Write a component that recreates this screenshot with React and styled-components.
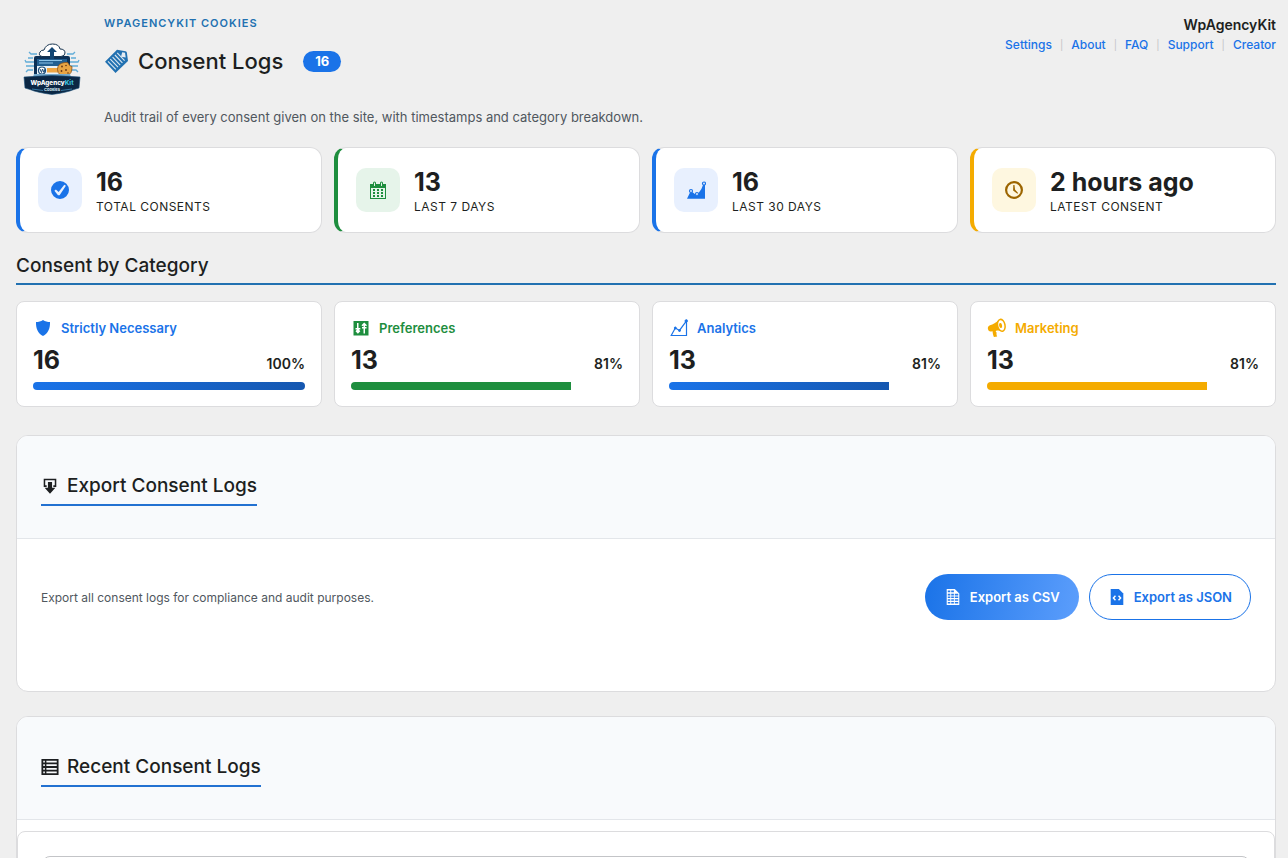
import React from "react";
import styled, { createGlobalStyle } from "styled-components";

const GlobalStyle = createGlobalStyle`
  *, *::before, *::after { box-sizing: border-box; }
  body {
    margin: 0;
    background: #efefef;
    color: #1d1f21;
    font-family: Inter, "Liberation Sans", sans-serif;
    font-size: 13px;
    line-height: 20px;
  }
  h1, h2, h3, p, dl, dd { margin: 0; }
`;

const Page = styled.main`
  height: 100vh;
  overflow: hidden;
  padding: 13px 12px 0 16px;
`;

const Header = styled.header`
  display: flex;
  gap: 16px;
  margin-bottom: 20px;
`;

const LogoSlot = styled.div`
  width: 72px;
  padding-top: 28px;
  display: flex;
  justify-content: center;
`;

const Intro = styled.div`
  flex: 1;
`;

const Eyebrow = styled.p`
  color: #2271b1;
  font-size: 11px;
  font-weight: 600;
  letter-spacing: 1px;
  text-transform: uppercase;
`;

const TitleRow = styled.div`
  display: flex;
  align-items: center;
  height: 32px;
  margin: 12px 0 30px;
`;

const Title = styled.h1`
  margin: 0 20px 0 9px;
  font-size: 22px;
  font-weight: 500;
  line-height: 32px;
`;

const CountBadge = styled.span`
  padding: 0 12px;
  border-radius: 11px;
  background: #1a73e8;
  color: #fff;
  font-weight: 700;
  line-height: 21px;
`;

const Description = styled.p`
  color: #50575e;
`;

const Brand = styled.div`
  text-align: right;
  padding-top: 2px;
`;

const BrandName = styled.strong`
  display: block;
  font-size: 14px;
  font-weight: 600;
`;

const BrandNav = styled.nav`
  display: flex;
  font-size: 12px;
  font-weight: 500;

  a {
    color: #1a73e8;
    text-decoration: none;
  }
  a + a::before {
    content: "|";
    margin: 0 8px;
    color: #c3c4c7;
    font-size: 10px;
    font-weight: 400;
    vertical-align: top;
  }
`;

const CardGrid = styled.div`
  display: grid;
  grid-template-columns: repeat(4, 1fr);
  gap: 12px;
`;

const StatCard = styled.article`
  display: flex;
  align-items: center;
  gap: 14px;
  height: 86px;
  padding: 0 18px;
  background: #fff;
  border: 1px solid #dcdcde;
  border-left: 4px solid ${(p) => p.$accent};
  border-radius: 12px;
`;

const StatIcon = styled.div`
  display: grid;
  place-items: center;
  width: 44px;
  height: 44px;
  border-radius: 10px;
  background: ${(p) => p.$tint};
  color: ${(p) => p.$ink};
`;

const StatText = styled.div`
  padding-top: 4px;
`;

const StatValue = styled.div`
  font-size: 25px;
  font-weight: 700;
  line-height: 30px;
`;

const StatLabel = styled.div`
  font-size: 12px;
  letter-spacing: 0.04em;
  text-transform: uppercase;
`;

const SectionTitle = styled.h2`
  margin: 16px 0;
  padding: 4px 0;
  border-bottom: 2px solid #2271b1;
  font-size: 19px;
  font-weight: 500;
  line-height: 26px;
`;

const CategoryCard = styled.article`
  height: 106px;
  padding: 16px;
  background: #fff;
  border: 1px solid #dcdcde;
  border-radius: 8px;
`;

const CategoryName = styled.h3`
  display: flex;
  align-items: center;
  gap: 8px;
  color: ${(p) => p.$accent};
  font-size: 13px;
  font-weight: 600;
`;

const CategoryFigures = styled.div`
  display: flex;
  align-items: baseline;
  justify-content: space-between;
  margin: 7px 0;
`;

const CategoryCount = styled.span`
  font-size: 25px;
  font-weight: 700;
  line-height: 30px;
`;

const CategoryShare = styled.span`
  font-size: 14px;
  font-weight: 600;
`;

const Track = styled.div`
  height: 8px;
  border-radius: 4px;
  overflow: hidden;
`;

const Fill = styled.div`
  height: 100%;
  background: ${(p) => p.$paint};
`;

const Panel = styled.section`
  margin-top: ${(p) => p.$gap};
  background: #fff;
  border: 1px solid #dcdcde;
  border-radius: 12px;
  overflow: hidden;
`;

const PanelHead = styled.div`
  height: 103px;
  padding: 36px 24px 0;
  background: #f8fafc;
  border-bottom: 1px solid #e3e6ea;
`;

const PanelTitle = styled.h2`
  display: inline-flex;
  align-items: center;
  gap: 8px;
  height: 34px;
  padding-bottom: 4px;
  border-bottom: 2px solid #2271d1;
  font-size: 19px;
  font-weight: 500;
`;

const ExportRow = styled.div`
  display: flex;
  align-items: center;
  justify-content: space-between;
  padding: 35px 24px 71px;
`;

const ExportText = styled.p`
  padding-top: 2px;
  color: #50575e;
  font-size: 12px;
`;

const Actions = styled.div`
  display: flex;
  gap: 10px;
`;

const PillButton = styled.button`
  display: flex;
  align-items: center;
  gap: 8px;
  height: 46px;
  padding: 0 18px;
  border: 1px solid ${(p) => (p.$filled ? "transparent" : "#1a73e8")};
  border-radius: 23px;
  background: ${(p) => (p.$filled ? "linear-gradient(100deg, #1a73e8, #5c9efc) border-box" : "#fff")};
  color: ${(p) => (p.$filled ? "#fff" : "#1a73e8")};
  font: 600 13px/20px Inter, "Liberation Sans", sans-serif;
  cursor: pointer;
`;

const LogPanel = styled.div`
  margin-top: 11px;
  padding: 24px;
  border: 1px solid #dcdcde;
  border-radius: 8px;
`;

const LogTable = styled.div`
  height: 60px;
  border: 1px solid #c3c4c7;
  border-radius: 8px;
`;

const Icon = ({ size = 20, children }) => (
  <svg width={size} height={size} viewBox="0 0 20 20" fill="currentColor" aria-hidden="true">
    {children}
  </svg>
);

const icons = {
  check: (
    <path fillRule="evenodd" d="M10 1a9 9 0 1 0 0 18 9 9 0 0 0 0-18zm4.3 3.7 1.6 1.1-6.3 9.4H8l-3.6-4.4 1.5-1.4 2.7 2.5z" />
  ),
  calendar: (
    <path
      fillRule="evenodd"
      d="M15 4h3v15H2V4h3V3a1.5 1.5 0 0 1 3 0v1h4V3a1.5 1.5 0 0 1 3 0v1zM6 3v2.5a.5.5 0 0 0 1 0V3a.5.5 0 0 0-1 0zm7 0v2.5a.5.5 0 0 0 1 0V3a.5.5 0 0 0-1 0zM3 8v10h14V8zm2 1h2v2H5zm4 0h2v2H9zm4 0h2v2h-2zm-8 3h2v2H5zm4 0h2v2H9zm4 0h2v2h-2zm-8 3h2v2H5zm4 0h2v2H9zm4 0h2v2h-2z"
    />
  ),
  area: (
    <>
      <path d="M1 18.800 4 12.500l2.200-.5 4.600 3.500 4.600-6.500L17 5h2v13.800z" />
      <g fill="#e8f0fe" stroke="currentColor" strokeWidth="1.200">
        <circle cx="5" cy="11" r="1.500" />
        <circle cx="11" cy="14" r="1.500" />
        <circle cx="18" cy="3.500" r="1.500" />
      </g>
    </>
  ),
  clock: (
    <path fillRule="evenodd" d="M10 1a9 9 0 1 1 0 18 9 9 0 0 1 0-18zm0 2.200a6.800 6.800 0 1 0 0 13.600 6.800 6.800 0 0 0 0-13.600zM9.300 5h1.200l.5 4.600 3.100 3.500-.7.7-4.300-3.200z" />
  ),
  shield: <path d="M10 2c2.200 1.400 4.500 2 7 2 .2 6.800-2 11.400-7 14C5 15.400 2.800 10.800 3 4c2.500 0 4.800-.6 7-2z" />,
  sliders: (
    <path fillRule="evenodd" d="M2.500 3h15v14.500h-15zM6 5v5H4.500v1.500H6l-1.500 1.700 2.400 2.600 2.400-2.600-1.500-1.700h1.500V10H7.500V5zm7.200-.5-2.700 2.800 1 1 1-.9V9H11v1.500h1.500v5H14v-5h1.500V9H14V7.400l1 .9 1-1z" />
  ),
  line: (
    <g fill="none" stroke="currentColor">
      <path d="M2.200 17.500 6.300 10l4.200 2.400 7-9.500v14.600z" strokeWidth="1.200" />
      <circle cx="6.300" cy="10" r="1" fill="currentColor" />
      <circle cx="10.500" cy="12.500" r="1" fill="currentColor" />
      <circle cx="17.200" cy="3" r="1.200" fill="currentColor" />
    </g>
  ),
  megaphone: (
    <>
      <path d="M12.200 1.500C9 5 6 6.300 3 7.200 1 7.900.5 9.500 1 11.300c.5 1.700 1.700 2.500 3.200 2.200l1.400-.2c0 1.700.5 3.700 1.300 5.700l3.300-.5c-.7-1.300-.9-2.700-.5-4.100l-1-.3.400-1.300c2.400-.4 4.600-.2 7.400.8z" />
      <ellipse cx="14.300" cy="7.300" rx="3.700" ry="6" transform="rotate(-12 14.300 7.300)" fill="#fff" stroke="currentColor" strokeWidth="1.500" />
      <ellipse cx="13.600" cy="7.500" rx="1.500" ry="2.500" transform="rotate(-12 13.600 7.500)" />
    </>
  ),
  download: (
    <path d="M3 2h14v9h-3.300V9.300h1.600V3.700H4.700v5.600h1.600V11H3zM7.700 5.500h4.600V12H16l-6 6.500L4 12h3.700z" />
  ),
  rows: (
    <path fillRule="evenodd" d="M.5 1h19v18H.5zm2 2v2h1.800V3zm3.500 0v2h11.500V3zM2.500 7v2h1.800V7zM6 7v2h11.500V7zm-3.500 4v2h1.800v-2zM6 11v2h11.500v-2zm-3.500 4v2h1.800v-2zM6 15v2h11.500v-2z" />
  ),
  sheet: (
    <path fillRule="evenodd" d="M3 1h9l5 5v13H3zm1.200 1.800v2H7v-2zm3.800 0v2h3v-2zM4.200 6.500v1.700H7V6.500zM8 6.500v1.700h3V6.500zm4 0v1.700h3.800V6.500zm-7.800 3v1.700H7V9.500zM8 9.500v1.700h3V9.500zm4 0v1.700h3.800V9.500zm-7.800 3v1.700H7v-1.700zM8 12.500v1.700h3v-1.700zm4 0v1.700h3.800v-1.700zm-7.800 3v1.700H7v-1.700zM8 15.500v1.700h3v-1.700zm4 0v1.700h3.800v-1.700z" />
  ),
  code: (
    <>
      <path d="M3 1h9l5 5v13H3z" />
      <path d="M8.300 8.500 6 11l2.300 2.500M11.700 8.500 14 11l-2.300 2.500" fill="none" stroke="#fff" strokeWidth="1.600" />
    </>
  ),
};

const PageIcon = () => (
  <svg width="25" height="25" viewBox="0 0 25 25" aria-hidden="true">
    <path d="M13 .8 21.500 2.200Q22.800 2.500 22.900 3.800L24 12 11.500 24 1 12.800z" fill="#2271b1" />
    <path d="M18.200 3.300l2.800.5.700 4.700-4.700-.7z" fill="#e4ecf3" />
    <path
      d="M4 12.300l7.800 8M6.300 10.200l7.700 8M8.600 8.100l7.600 8M10.900 6l7.500 7.900M13.200 3.900l7.400 7.700"
      stroke="#dbe7f1"
      strokeWidth="1.100"
    />
  </svg>
);

const Logo = () => (
  <svg width="58" height="64" viewBox="0 0 58 64" role="img" aria-label="WpAgencyKit Cookies">
    <g stroke="#62add8" strokeWidth="1.300" fill="none">
      <path d="M10 17H5M11 21H3l-1-2M11 25H3M10 29H5l-2 2M14 13H8l-2-2M48 17h5M47 21h8l1-2M47 25h8M48 29h5l2 2M44 13h6l2-2" />
    </g>
    <path d="M11 35V17q0-2 2-2h32q2 0 2 2v18z" fill="#0d3156" />
    <path d="M14 18h30v16H14z" fill="#225f91" />
    <path d="M16 19.500h23M16 22h14" stroke="#8bc3e8" strokeWidth="1" />
    <path d="M14 25h30v9H14z" fill="#e9f2f8" />
    <path d="M19 15.500q-4-1-2-4.500 1-2 4-2 2-6 8.500-6 6.500 0 7.500 5 5 0 5 4 0 3-4 3.500z" fill="#fff" stroke="#17344f" strokeWidth="1" />
    <path d="M29 6l5 5h-3v7h-4v-7h-3z" fill="#124674" />
    <circle cx="19" cy="29.500" r="3.500" fill="#fff" stroke="#194c78" strokeWidth="1.200" />
    <path d="M17 28l1.500 3.500L19.500 28l1.500 3.500 1-3.500" fill="none" stroke="#194c78" />
    <rect x="24" y="27" width="11" height="4.500" fill="#eea644" />
    <path d="M42 21.500q3-1 4 2 1 2 3 2 0 4-1 6-2 3.500-6 3.500-7 0-7.500-6.500 0-6.500 7.500-7z" fill="#e9a544" stroke="#86501c" strokeWidth=".8" />
    <g fill="#643516">
      <circle cx="39" cy="25.500" r=".9" />
      <circle cx="43" cy="24.500" r=".8" />
      <circle cx="38.500" cy="30" r=".9" />
      <circle cx="43" cy="29" r=".9" />
      <circle cx="45" cy="32" r=".8" />
    </g>
    <path d="M11 33h36l1 3H10z" fill="#75aacd" />
    <path d="M1 36q28-3 56 0l-1 11-5 1.500q-7 3-22 5-15-2-22-5L2 47z" fill="#0b2744" stroke="#174e77" strokeWidth=".6" />
    <path d="M9 48l11 1.500M38 49.500 49 48" stroke="#4a9bc8" strokeWidth=".7" />
    <text x="29" y="43.500" textAnchor="middle" fontFamily="Inter, sans-serif" fontSize="6.300" fontWeight="800" fill="#fff">
      WpAgency<tspan fill="#3ec1dd">Kit</tspan>
    </text>
    <text x="29" y="49.500" textAnchor="middle" fontFamily="Inter, sans-serif" fontSize="4" fontWeight="700" fill="#dcecf6">
      Cookies
    </text>
  </svg>
);

const BLUE = "#1a73e8";
const GREEN = "#1e8e3e";
const AMBER = "#f4ab00";
const BLUE_BAR = "linear-gradient(90deg, #1a73e8, #1557b0)";

const stats = [
  { value: "16", label: "Total consents", icon: "check", accent: BLUE, ink: BLUE, tint: "#e8f0fe" },
  { value: "13", label: "Last 7 days", icon: "calendar", accent: GREEN, ink: GREEN, tint: "#e6f4ea" },
  { value: "16", label: "Last 30 days", icon: "area", accent: BLUE, ink: BLUE, tint: "#e8f0fe" },
  { value: "2 hours ago", label: "Latest consent", icon: "clock", accent: AMBER, ink: "#9c6500", tint: "#fef7e0" },
];

const categories = [
  { name: "Strictly Necessary", count: 16, share: 100, icon: "shield", accent: BLUE, paint: BLUE_BAR },
  { name: "Preferences", count: 13, share: 81, icon: "sliders", accent: GREEN, paint: GREEN },
  { name: "Analytics", count: 13, share: 81, icon: "line", accent: BLUE, paint: BLUE_BAR },
  { name: "Marketing", count: 13, share: 81, icon: "megaphone", accent: AMBER, paint: AMBER },
];

export default function App() {
  return (
    <>
      <GlobalStyle />
      <Page>
        <Header>
          <LogoSlot>
            <Logo />
          </LogoSlot>
          <Intro>
            <Eyebrow>WpAgencyKit Cookies</Eyebrow>
            <TitleRow>
              <PageIcon />
              <Title>Consent Logs</Title>
              <CountBadge>16</CountBadge>
            </TitleRow>
            <Description>
              Audit trail of every consent given on the site, with timestamps and category breakdown.
            </Description>
          </Intro>
          <Brand>
            <BrandName>WpAgencyKit</BrandName>
            <BrandNav>
              {["Settings", "About", "FAQ", "Support", "Creator"].map((item) => (
                <a key={item} href={`#${item.toLowerCase()}`}>
                  {item}
                </a>
              ))}
            </BrandNav>
          </Brand>
        </Header>

        <CardGrid>
          {stats.map((s) => (
            <StatCard key={s.label} $accent={s.accent}>
              <StatIcon $tint={s.tint} $ink={s.ink}>
                <Icon>{icons[s.icon]}</Icon>
              </StatIcon>
              <StatText>
                <StatValue>{s.value}</StatValue>
                <StatLabel>{s.label}</StatLabel>
              </StatText>
            </StatCard>
          ))}
        </CardGrid>

        <SectionTitle>Consent by Category</SectionTitle>
        <CardGrid>
          {categories.map((c) => (
            <CategoryCard key={c.name}>
              <CategoryName $accent={c.accent}>
                <Icon>{icons[c.icon]}</Icon>
                {c.name}
              </CategoryName>
              <CategoryFigures>
                <CategoryCount>{c.count}</CategoryCount>
                <CategoryShare>{c.share}%</CategoryShare>
              </CategoryFigures>
              <Track>
                <Fill $paint={c.paint} style={{ width: `${c.share}%` }} />
              </Track>
            </CategoryCard>
          ))}
        </CardGrid>

        <Panel $gap="28px">
          <PanelHead>
            <PanelTitle>
              <Icon size={18}>{icons.download}</Icon>
              Export Consent Logs
            </PanelTitle>
          </PanelHead>
          <ExportRow>
            <ExportText>Export all consent logs for compliance and audit purposes.</ExportText>
            <Actions>
              <PillButton type="button" $filled>
                <Icon size={18}>{icons.sheet}</Icon>
                Export as CSV
              </PillButton>
              <PillButton type="button">
                <Icon size={18}>{icons.code}</Icon>
                Export as JSON
              </PillButton>
            </Actions>
          </ExportRow>
        </Panel>

        <Panel $gap="24px">
          <PanelHead>
            <PanelTitle>
              <Icon size={18}>{icons.rows}</Icon>
              Recent Consent Logs
            </PanelTitle>
          </PanelHead>
          <LogPanel>
            <LogTable />
          </LogPanel>
        </Panel>
      </Page>
    </>
  );
}
